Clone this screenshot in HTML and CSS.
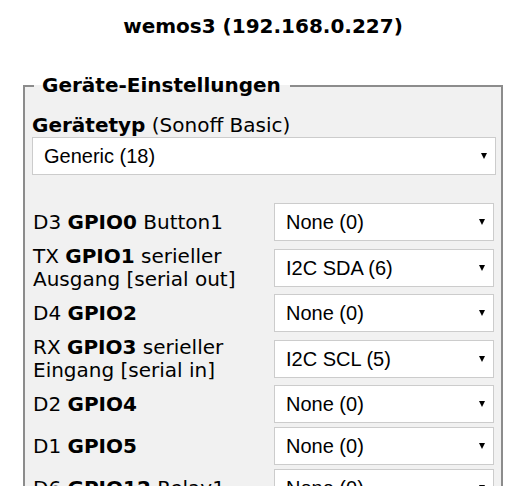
FILE: index.html
```html
<!DOCTYPE html>
<html lang="de">
<head>
<meta charset="utf-8">
<title>wemos3 - Geräte-Einstellungen</title>
<link rel="stylesheet" href="styles.css">
</head>
<body>
<div class="page">
  <h3 class="title">wemos3 (192.168.0.227)</h3>
  <fieldset class="box">
    <legend class="legend">Geräte-Einstellungen</legend>
    <p class="typ"><b>Gerätetyp</b> (Sonoff Basic)</p>
    <div class="sel">
      <select class="field"><option>Generic (18)</option></select>
      <svg class="arrow" width="6" height="6" viewBox="0 0 6 6"><polygon points="0,0 6,0 3,6"/></svg>
    </div>
    <div class="gpio">
      <div class="lbl">D3 <b>GPIO0</b> Button1</div>
      <div class="sel"><select class="field"><option>None (0)</option></select><svg class="arrow" width="6" height="6" viewBox="0 0 6 6"><polygon points="0,0 6,0 3,6"/></svg></div>

      <div class="lbl">TX <b>GPIO1</b> serieller Ausgang [serial out]</div>
      <div class="sel"><select class="field"><option>I2C SDA (6)</option></select><svg class="arrow" width="6" height="6" viewBox="0 0 6 6"><polygon points="0,0 6,0 3,6"/></svg></div>

      <div class="lbl">D4 <b>GPIO2</b></div>
      <div class="sel"><select class="field"><option>None (0)</option></select><svg class="arrow" width="6" height="6" viewBox="0 0 6 6"><polygon points="0,0 6,0 3,6"/></svg></div>

      <div class="lbl">RX <b>GPIO3</b> serieller Eingang [serial in]</div>
      <div class="sel"><select class="field"><option>I2C SCL (5)</option></select><svg class="arrow" width="6" height="6" viewBox="0 0 6 6"><polygon points="0,0 6,0 3,6"/></svg></div>

      <div class="lbl">D2 <b>GPIO4</b></div>
      <div class="sel"><select class="field"><option>None (0)</option></select><svg class="arrow" width="6" height="6" viewBox="0 0 6 6"><polygon points="0,0 6,0 3,6"/></svg></div>

      <div class="lbl">D1 <b>GPIO5</b></div>
      <div class="sel"><select class="field"><option>None (0)</option></select><svg class="arrow" width="6" height="6" viewBox="0 0 6 6"><polygon points="0,0 6,0 3,6"/></svg></div>

      <div class="lbl">D6 <b>GPIO12</b> Relay1</div>
      <div class="sel"><select class="field"><option>None (0)</option></select><svg class="arrow" width="6" height="6" viewBox="0 0 6 6"><polygon points="0,0 6,0 3,6"/></svg></div>

      <div class="lbl">D7 <b>GPIO13</b> Led1i</div>
      <div class="sel"><select class="field"><option>None (0)</option></select><svg class="arrow" width="6" height="6" viewBox="0 0 6 6"><polygon points="0,0 6,0 3,6"/></svg></div>
    </div>
  </fieldset>
</div>
</body>
</html>
```
FILE: styles.css
```css
html, body {
  margin: 0;
  padding: 0;
  background: #ffffff;
  overflow: hidden;
}
body {
  font-family: Verdana, "DejaVu Sans", sans-serif;
  font-size: 20px;
  color: #000000;
}
.page {
  width: 480px;
  margin: 0 0 0 23px;
}
.title {
  margin: 14px 0 0;
  text-align: center;
  font-size: 20px;
  font-weight: bold;
  line-height: 24px;
}
.box {
  margin: 36px 0 0;
  padding: 0 5px 8px 7px;
  border: 2px solid #8c8c8c;
  background: #f1f1f1;
}
.legend {
  font-weight: bold;
  line-height: 23px;
  padding: 0 9px 0 8px;
  margin-left: 2px;
}
.typ {
  margin: 17px 0 0;
  line-height: 23px;
}
.sel {
  position: relative;
}
.field {
  display: block;
  width: 100%;
  height: 38px;
  margin: 0;
  padding: 0 24px 0 11px;
  border: 1px solid #cccccc;
  border-radius: 0;
  background: #ffffff;
  font-family: Arial, "Liberation Sans", sans-serif;
  font-size: 20px;
  color: #000000;
  appearance: none;
  -webkit-appearance: none;
}
.arrow {
  position: absolute;
  right: 9px;
  top: 16px;
  fill: #000000;
}
.gpio {
  display: grid;
  grid-template-columns: 1fr 220px;
  row-gap: 4px;
  align-items: center;
  margin: 28px 2px 0 1px;
}
.lbl {
  line-height: 22.5px;
}
```
